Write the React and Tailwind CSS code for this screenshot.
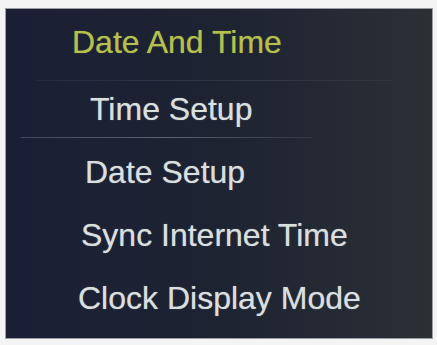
import React from "react";

const items = [
  { label: "Time Setup", pad: "pl-[84px]", line: true },
  { label: "Date Setup", pad: "pl-[79px]" },
  { label: "Sync Internet Time", pad: "pl-[75px]" },
  { label: "Clock Display Mode", pad: "pl-[72px]" },
];

function MenuRow({ item }) {
  return (
    <div className="relative h-[63px]">
      <p
        className={`${item.pad} text-[32px] leading-[63px] text-[#d9dede] whitespace-nowrap [text-shadow:0_0_1px_rgba(220,225,225,0.6)]`}
      >
        {item.label}
      </p>
      {item.line && (
        <div className="absolute left-[15px] right-[120px] bottom-[3px] h-px bg-gradient-to-r from-[#5a6272] via-[#8a909a] to-[#3a404c] opacity-60" />
      )}
    </div>
  );
}

export default function App() {
  return (
    <div
      className="w-[437px] h-[345px] bg-[#f4f4f4] pt-[8px] pl-[5px] overflow-hidden"
      style={{ fontFamily: '"Liberation Sans", Arial, sans-serif' }}
    >
      <div className="w-[428px] h-[331px] border border-[#9a9ea4] bg-gradient-to-r from-[#1b1f36] via-[#1d2331] to-[#2b3035]">
        <div className="relative h-[69px]">
          <p className="pl-[66px] text-[32px] leading-[66px] text-[#b5c04e] whitespace-nowrap [text-shadow:0_0_1px_rgba(181,192,78,0.6)]">
            Date And Time
          </p>
          <div className="absolute left-[30px] right-[40px] bottom-[-3px] h-px bg-gradient-to-r from-[#2c3350] via-[#444a62] to-[#363b42] opacity-50" />
        </div>
        {items.map((item) => (
          <MenuRow key={item.label} item={item} />
        ))}
      </div>
    </div>
  );
}
